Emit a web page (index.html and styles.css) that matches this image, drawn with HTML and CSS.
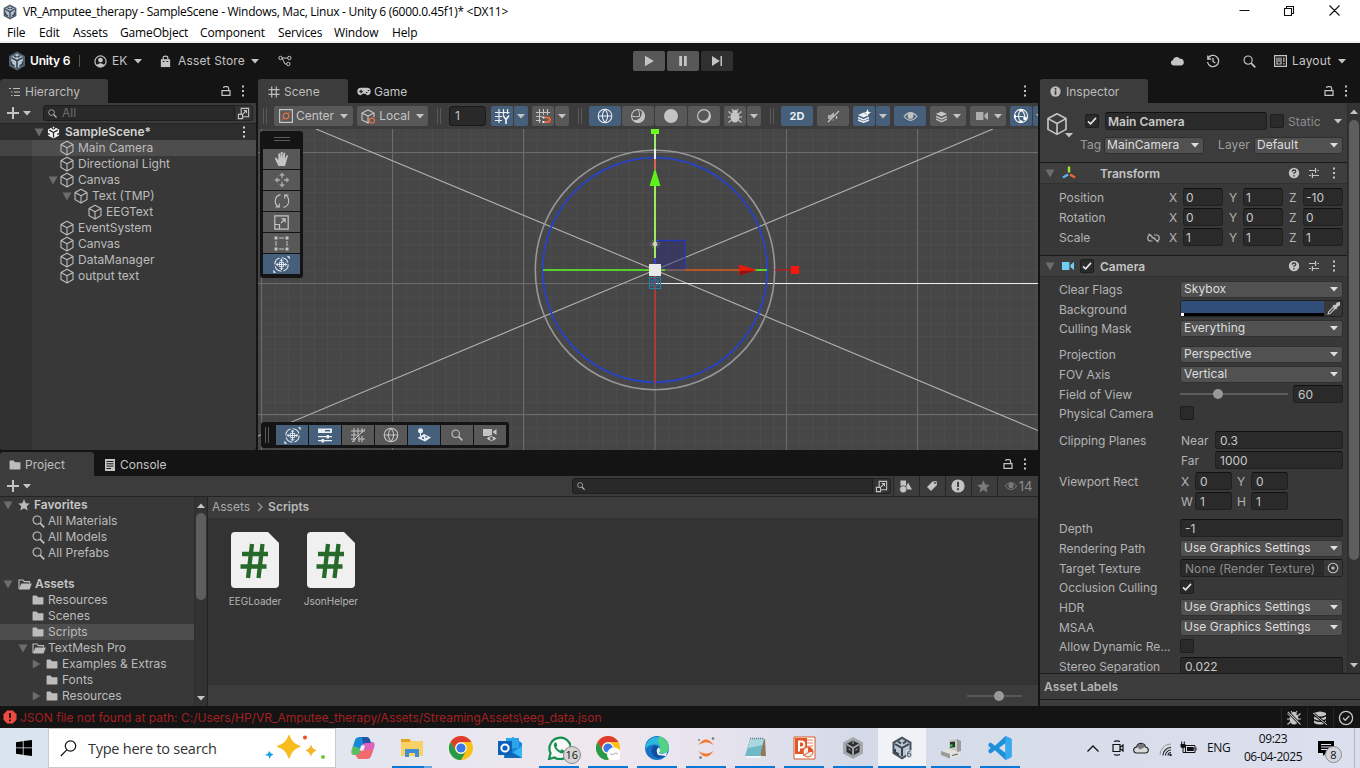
FILE: index.html
```html
<!DOCTYPE html>
<html lang="en">
<head>
<meta charset="utf-8">
<title>VR_Amputee_therapy - SampleScene - Unity 6</title>
<link rel="stylesheet" href="styles.css">
</head>
<body>
<svg class="defs" aria-hidden="true">
  <symbol id="cube" viewBox="0 0 16 16"><path d="M8 1.2 14 4.4V11.6L8 14.9 2 11.6V4.4ZM2 4.4 8 7.7 14 4.4M8 7.7V14.9" fill="none" stroke="currentColor" stroke-width="1.1" stroke-linejoin="round"/></symbol>
  <symbol id="down" viewBox="0 0 8 5"><path d="M0 0H8L4 4.6Z" fill="currentColor"/></symbol>
  <symbol id="fold" viewBox="0 0 10 9"><path d="M.5 .5H9.5L5 8.5Z" fill="currentColor"/></symbol>
  <symbol id="foldr" viewBox="0 0 9 10"><path d="M.8 .5V9.5L8.2 5Z" fill="currentColor"/></symbol>
  <symbol id="lock" viewBox="0 0 12 12"><path d="M2 5.6H10V10.4H2ZM8.6 5.4V3.2Q8.6 1.6 7 1.6H5Q3.6 1.6 3.5 3" fill="none" stroke="currentColor" stroke-width="1.2"/></symbol>
  <symbol id="dots" viewBox="0 0 4 12"><path d="M1 .5H3V2.5H1ZM1 5H3V7H1ZM1 9.5H3V11.5H1Z" fill="currentColor"/></symbol>
  <symbol id="plus" viewBox="0 0 12 12"><path d="M6 0V12M0 6H12" stroke="currentColor" stroke-width="2"/></symbol>
  <symbol id="popout" viewBox="0 0 14 14"><path d="M4.5 8V1.5H12.5V10.5H6.5M1.5 8H6V12.5H1.5ZM6.5 7.5 10 4M7.2 3.7H10.2V6.8" fill="none" stroke="currentColor" stroke-width="1.2"/></symbol>
  <symbol id="mag" viewBox="0 0 14 14"><circle cx="5.5" cy="5.5" r="4.4" fill="none" stroke="currentColor" stroke-width="1.2"/><path d="M8.8 8.8 13.2 13.2" stroke="currentColor" stroke-width="1.9"/></symbol>
  <symbol id="folder" viewBox="0 0 13 11"><path d="M.5 1.5Q.5.5 1.5.5H5L6.5 2.5H12.5V10Q12.5 10.5 12 10.5H1Q.5 10.5.5 10Z" fill="currentColor"/></symbol>
  <symbol id="folderopen" viewBox="0 0 14 11"><path d="M1 10V1H5L6.3 2.6H11.6V4.3" fill="none" stroke="currentColor" stroke-width="1.1"/><path d="M3.3 4.4H13.8L11.6 10.5H.8Z" fill="currentColor"/></symbol>
  <symbol id="star" viewBox="0 0 12 12"><path d="M6 .3 7.7 4.2 11.8 4.6 8.7 7.3 9.7 11.5 6 9.3 2.3 11.5 3.3 7.3.2 4.6 4.3 4.2Z" fill="currentColor"/></symbol>
  <symbol id="eye" viewBox="0 0 16 12"><path d="M1 6Q8-2.4 15 6 8 14.4 1 6Z" fill="none" stroke="currentColor" stroke-width="1.2"/><circle cx="8" cy="5.4" r="3.1" fill="currentColor"/></symbol>
  <symbol id="grid" viewBox="0 0 12 12"><path d="M3.7 .5V11.5M8.3 .5V11.5M.5 3.7H11.5M.5 8.3H11.5" stroke="currentColor" stroke-width="1.2"/></symbol>
  <symbol id="globe" viewBox="0 0 16 16"><circle cx="8" cy="8" r="6.8" fill="none" stroke="currentColor" stroke-width="1.1"/><path d="M1.2 8H14.8M8 1.2Q2.6 8 8 14.8M8 1.2Q13.4 8 8 14.8" fill="none" stroke="currentColor" stroke-width="1.1"/></symbol>
  <symbol id="check" viewBox="0 0 12 12"><path d="M2 6.3 4.6 8.8 10 2.9" fill="none" stroke="#e6e6e6" stroke-width="1.6"/></symbol>
  <symbol id="help" viewBox="0 0 12 12"><circle cx="6" cy="6" r="5.2" fill="currentColor"/><path d="M4.2 4.6Q4.3 3 6 3T7.8 4.5Q7.8 5.4 6 6V7.1M6 8V9.4" fill="none" stroke="#3c3c3c" stroke-width="1.3"/></symbol>
  <symbol id="preset" viewBox="0 0 12 12"><path d="M1 3.5H7M9.4 3.5H11M7.6 1V6M1 8.5H3M5 8.5H11M4.4 6V11" stroke="currentColor" stroke-width="1.2"/></symbol>
  <symbol id="camera" viewBox="0 0 14 10"><path d="M1 1H8.4V9H1ZM9.5 3.8 13 1V9L9.5 6.2Z" fill="currentColor"/></symbol>
  <symbol id="bug" viewBox="0 0 16 16"><ellipse cx="8" cy="9" rx="4.4" ry="5.6" fill="currentColor"/><path d="M4.800 4Q8 -.5 11.200 4Z" fill="currentColor"/><path d="M1.500 3.500 5 6.500M14.500 3.500 11 6.500M1 9H15M1.500 14.500 5 11.500M14.500 14.500 11 11.500M5 1 6.4 3M11 1 9.6 3" fill="none" stroke="currentColor" stroke-width="1.1"/></symbol>
  <symbol id="move" viewBox="0 0 16 16"><path d="M8 2.5V6.2M8 9.8V13.5M2.5 8H6.2M9.8 8H13.5" stroke="currentColor" stroke-width="1.3"/><path d="M5.2 3.8 8 .5 10.8 3.8ZM5.2 12.2 8 15.5 10.8 12.2ZM3.8 5.2 .5 8 3.8 10.8ZM12.2 5.2 15.5 8 12.2 10.8Z" fill="currentColor"/></symbol>
  <symbol id="transform" viewBox="0 0 16 16"><circle cx="8" cy="8" r="6.3" fill="none" stroke="currentColor" stroke-width="1" stroke-dasharray="7.900 2"/><path d="M8 3V13M3 8H13M6.400 4.600 8 3 9.600 4.600M6.400 11.400 8 13 9.600 11.400M4.600 6.400 3 8 4.600 9.600M11.400 6.400 13 8 11.400 9.600M6 6H10V10H6Z" fill="none" stroke="currentColor" stroke-width=".9"/><path d="M13 .3H15.7V3ZM.3 13V15.7H3Z" fill="currentColor"/></symbol>
  <symbol id="layers" viewBox="0 0 14 14"><path d="M7 1.5 13 4.2 7 7 1 4.2Z" fill="currentColor"/><path d="M1.2 7 7 9.6 12.8 7M1.2 9.9 7 12.5 12.8 9.9" fill="none" stroke="currentColor" stroke-width="1.6"/></symbol>
  <symbol id="hex" viewBox="0 0 18 20"><path d="M9 .5 17 5V15L9 19.5 1 15V5Z" fill="#4e5f70"/><path d="M9 2.8 14.800 6V14L9 17.200 3.200 14V6Z" fill="#b9c6d0"/><path d="M9 9.8 3.4 6.6M9 9.8 14.6 6.6M9 9.8V17M6 4.7 8.5 6.2M12 4.7 9.5 6.2M3.5 10.5V13.3L6.5 15M14.5 10.5V13.3L11.5 15" stroke="#344453" stroke-width="1.6" fill="none"/></symbol>
  <symbol id="chrome" viewBox="0 0 24 24"><circle cx="12" cy="12" r="12" fill="#fbc116"/><path d="M1.6 6A12 12 0 0 1 22.4 6H12A6 6 0 0 0 6.8 15Z" fill="#df3b30"/><path d="M1.6 6A12 12 0 0 0 12 24L17.2 15A6 6 0 0 1 6.8 15Z" fill="#249b4a"/><circle cx="12" cy="12" r="5.7" fill="#fff"/><circle cx="12" cy="12" r="4.6" fill="#3978e8"/></symbol>
</svg>

<header class="titlebar">
  <svg class="i16 ticon"><use href="#hex"/></svg>
  <span class="title">VR_Amputee_therapy - SampleScene - Windows, Mac, Linux - Unity 6 (6000.0.45f1)* &lt;DX11&gt;</span>
  <svg class="winbtns" viewBox="0 0 110 22"><path d="M.5 9.500H10.500M45.500 7.500H52.500V14.500H45.500ZM47.500 7V5.500H54.500V12.500H53M90.500 4.500 100.500 14.500M100.500 4.500 90.500 14.500" fill="none" stroke="#111" stroke-width="1.100"/></svg>
</header>
<nav class="menubar"><span class="m1">File</span><span class="m2">Edit</span><span class="m3">Assets</span><span class="m4">GameObject</span><span class="m5">Component</span><span class="m6">Services</span><span class="m7">Window</span><span>Help</span></nav>

<div class="toolbar">
  <div class="tb-left">
    <svg class="ulogo"><use href="#hex"/></svg><b class="uname">Unity 6</b><i class="sep"></i>
    <svg class="i13 acc" viewBox="0 0 14 14"><circle cx="7" cy="7" r="6" fill="none" stroke="currentColor" stroke-width="1.300"/><circle cx="7" cy="5.500" r="2.600" fill="currentColor"/><path d="M2.500 11Q7 6.500 11.500 11 7 15 2.500 11Z" fill="currentColor"/></svg>
    <span class="ek">EK</span><svg class="dn"><use href="#down"/></svg>
    <svg class="i13 bag" viewBox="0 0 12 14"><path d="M1 4.500H11V13H1Z" fill="currentColor"/><path d="M3.500 5V3Q3.500 1.200 6 1.200T8.500 3V5" fill="none" stroke="currentColor" stroke-width="1.300"/><path d="M3 7H5M7 7H9" stroke="#191919"/></svg>
    <span class="as">Asset Store</span><svg class="dn"><use href="#down"/></svg>
    <svg class="branch" viewBox="0 0 14 12"><path d="M4 3H9.500M4 3 7 9H8.500" fill="none" stroke="currentColor"/><circle cx="2.500" cy="3" r="1.700" fill="none" stroke="currentColor"/><circle cx="11.300" cy="3" r="1.700" fill="none" stroke="currentColor"/><circle cx="10.300" cy="9" r="1.700" fill="none" stroke="currentColor"/></svg>
  </div>
  <div class="play">
    <span><svg class="i13" viewBox="0 0 12 12"><path d="M2 .8V11.200L10.800 6Z" fill="currentColor"/></svg></span>
    <span><svg class="i13" viewBox="0 0 12 12"><path d="M2.200 1H5V11H2.200ZM7 1H9.800V11H7Z" fill="currentColor"/></svg></span>
    <span class="off"><svg class="i13" viewBox="0 0 12 12"><path d="M1 1V11L8.800 6ZM9.500 1H11V11H9.500Z" fill="currentColor"/></svg></span>
  </div>
  <div class="tb-right">
    <svg class="cloud" viewBox="0 0 14 10"><path d="M3.500 9.500A2.800 2.800 0 0 1 3 4 3.800 3.800 0 0 1 10 2.800 3.300 3.300 0 0 1 10.800 9.500Z" fill="currentColor"/></svg>
    <svg class="hist" viewBox="0 0 14 14"><path d="M2 4.500A5.600 5.600 0 1 1 1.500 8M1.800 1.500V5H5.200M7 4V7.500L9.300 9" fill="none" stroke="currentColor" stroke-width="1.300"/></svg>
    <svg class="msearch"><use href="#mag"/></svg>
    <svg class="lay" viewBox="0 0 13 12"><path d="M.6 .6H12.400V11.400H.6ZM3 2.500V9H7V2.500M5 2.500V7M9.800 2.500V7M9.800 8V9.500" fill="none" stroke="currentColor" stroke-width="1.200"/></svg>
    <span class="layout-t">Layout</span><svg class="dn"><use href="#down"/></svg>
  </div>
</div>

<main class="work">
 <div class="left">
  <div class="top">
   <section class="hier">
    <div class="tabs"><div class="tab t-h"><svg class="i12" viewBox="0 0 12 12"><path d="M0 2.500H2M4 2.500H11M2 6H3.500M5 6H11M2 9.500H3.500M5 9.500H11" stroke="currentColor" stroke-width="1.200"/></svg><span>Hierarchy</span></div><svg class="lock"><use href="#lock"/></svg><svg class="dots"><use href="#dots"/></svg></div>
    <div class="bar hbar"><svg class="plus"><use href="#plus"/></svg><svg class="dns"><use href="#down"/></svg><div class="search hs"><svg class="i9"><use href="#mag"/></svg><span>All</span></div><div class="pop"><svg class="i13"><use href="#popout"/></svg></div></div>
    <div class="tree">
      <div class="scene-row"><svg class="fold"><use href="#fold"/></svg><svg class="i13 uw" viewBox="0 0 14 14"><path d="M7 .5 13 3.800V10.200L7 13.500 1 10.200V3.800Z" fill="#f2f2f2"/><path d="M7 7 2.500 4.500M7 7 11.500 4.500M7 7V12.500M4.500 .5 6.500 3.500M9.500 .5 7.500 3.500M0 8 3 9M14 8 11 9" stroke="#2a2a2a" stroke-width="1.400"/></svg><b>SampleScene*</b><svg class="dots"><use href="#dots"/></svg></div>
      <div class="row sel l1"><svg class="cube"><use href="#cube"/></svg>Main Camera</div>
      <div class="row l1"><svg class="cube"><use href="#cube"/></svg>Directional Light</div>
      <div class="row l1 f"><svg class="fold"><use href="#fold"/></svg><svg class="cube"><use href="#cube"/></svg>Canvas</div>
      <div class="row l2 f"><svg class="fold"><use href="#fold"/></svg><svg class="cube"><use href="#cube"/></svg>Text (TMP)</div>
      <div class="row l3"><svg class="cube"><use href="#cube"/></svg>EEGText</div>
      <div class="row l1"><svg class="cube"><use href="#cube"/></svg>EventSystem</div>
      <div class="row l1"><svg class="cube"><use href="#cube"/></svg>Canvas</div>
      <div class="row l1"><svg class="cube"><use href="#cube"/></svg>DataManager</div>
      <div class="row l1"><svg class="cube"><use href="#cube"/></svg>output text</div>
    </div>
   </section>

   <section class="scene">
    <div class="tabs"><div class="tab t-s"><svg class="i12"><use href="#grid"/></svg><span>Scene</span></div><div class="tab2"><svg class="pad" viewBox="0 0 14 9"><path d="M4 .8H10Q13.700 .8 13.700 4.500T10 8.200L8.500 6.700H5.500L4 8.200Q.3 8.200 .3 4.500T4 .8Z" fill="currentColor"/><path d="M2.200 4.500H5.800M4 2.700V6.300M9 5.500H10.400M10.800 3.500H12.200" stroke="#191919" stroke-width="1.200"/></svg><span>Game</span></div><svg class="dots end"><use href="#dots"/></svg></div>
    <div class="stools">
      <i class="grip"></i>
      <div class="b w78 g8"><svg class="i14" viewBox="0 0 14 14"><path d="M.6 .6H13.400V13.400H.6Z" fill="none" stroke="currentColor" stroke-width="1.200"/><path d="M2.500 11.500 5 9M9 5 11.500 2.500" stroke="#e0704a"/><circle cx="7" cy="7" r="2.800" fill="none" stroke="#e0704a" stroke-width="1.300"/></svg><span>Center</span><svg class="dn"><use href="#down"/></svg></div>
      <div class="b w71 g4"><svg class="i15" viewBox="0 0 15 15"><path d="M8 13.500 7 14 1 11V4L7 1 13 4V8M1 4 7 7 13 4M7 7V14" fill="none" stroke="currentColor" stroke-width="1.200"/><circle cx="11" cy="11.600" r="2.500" fill="none" stroke="#e0704a" stroke-width="1.300"/></svg><span>Local</span><svg class="dn"><use href="#down"/></svg></div>
      <i class="grip g9"></i>
      <div class="num g8b">1</div>
      <div class="b on w22 g5"><svg class="i15" viewBox="0 0 15 15"><path d="M4 0V14M8.500 0V6M12.500 0V5M0 3.500H14.500M0 7.500H7M0 11.500H7" stroke="currentColor" stroke-width="1.200"/><path d="M8 6.500 11 10.500 14 6.500M11 10.500V15" fill="none" stroke="currentColor" stroke-width="1.700"/></svg></div><div class="b on w14 g1"><svg class="dns"><use href="#down"/></svg></div>
      <div class="b w22 g4"><svg class="i15" viewBox="0 0 15 15"><path d="M3.500 0V14M7.500 0V6M11.500 0V6M0 3.500H14M0 7.500H6M0 11.500H5" stroke="currentColor" stroke-width="1.100"/><path d="M9 8.500H11.500Q13.800 8.500 13.800 10.800T11.500 13H9" fill="none" stroke="#f0663c" stroke-width="2.200"/><path d="M6.500 7.500H8.500V9.500H6.500ZM6.500 12H8.500V14H6.500Z" fill="#eee"/></svg></div><div class="b w14 g1"><svg class="dns"><use href="#down"/></svg></div>
      <i class="grip g9"></i>
      <div class="b on w32 g8"><svg class="i16"><use href="#globe"/></svg></div>
      <div class="b w32 g1"><svg class="i16" viewBox="0 0 16 16"><circle cx="8" cy="8" r="6.500" fill="none" stroke="currentColor" stroke-width="1.100"/><path d="M11.500 2.500A6.600 6.600 0 1 1 2.500 11.800Q7 13 9.800 10T11.500 2.500Z" fill="currentColor"/><path d="M1.500 8Q5 9.300 9.500 8.500 10 5 8.200 1.500" fill="none" stroke="currentColor"/></svg></div>
      <div class="b w32 g1"><svg class="i16" viewBox="0 0 16 16"><circle cx="8" cy="8" r="7" fill="currentColor"/></svg></div>
      <div class="b w32 g1"><svg class="i16" viewBox="0 0 16 16"><circle cx="8" cy="8" r="6.400" fill="none" stroke="currentColor" stroke-width="1.200"/><path d="M11 2.300A6.500 6.500 0 1 1 2.200 11 5.700 5.700 0 1 0 11 2.300Z" fill="currentColor"/></svg></div>
      <div class="b w22 g4"><svg class="i16"><use href="#bug"/></svg></div><div class="b w14 g1"><svg class="dns"><use href="#down"/></svg></div>
      <i class="grip g9"></i>
      <div class="b on w32 g7 twod">2D</div>
      <div class="b w32 g4"><svg class="i13" viewBox="0 0 13 13"><path d="M1 5H3.500L7 2V6L3.500 9H1ZM7 9V11L5.500 10" fill="currentColor" opacity=".8"/><path d="M1 12 12 1M9.500 6V9" stroke="currentColor" stroke-width="1.300"/></svg></div>
      <div class="b on w22 g4"><svg class="i14" viewBox="0 0 14 14"><path d="M6.500 3.500 1 6 6.500 8.500 11 6.500" fill="currentColor"/><path d="M1 8.500 6.500 11 12 8.500M1 11 6.500 13.300 12 11" fill="none" stroke="currentColor" stroke-width="1.500"/><path d="M10.500 0 11.500 2.800 14 3.800 11.500 4.800 10.500 7.500 9.500 4.800 7 3.800 9.500 2.800Z" fill="#fff"/></svg></div><div class="b on w14 g1"><svg class="dns"><use href="#down"/></svg></div>
      <div class="b on w32 g4"><svg class="eye"><use href="#eye"/></svg></div>
      <div class="b w36 g4"><svg class="i13"><use href="#layers"/></svg><svg class="dns m5l"><use href="#down"/></svg></div>
      <div class="b w36 g4"><svg class="cam"><use href="#camera"/></svg><svg class="dns m5l"><use href="#down"/></svg></div>
      <div class="b on w22 g4"><svg class="i16" viewBox="0 0 16 16"><circle cx="8" cy="8" r="6.600" fill="none" stroke="currentColor" stroke-width="1.200"/><path d="M8 1.500Q3 8 8 14.500M8 1.500Q12 5 12 10M1.500 8.500H9M9 8.500 13.500 10" fill="none" stroke="currentColor" stroke-width="1.200"/><path d="M6.500 1H9.500V3.500H6.500ZM10.500 9H13.500V12H10.500ZM6.500 12.500H9.500V15H6.500ZM1 7H3V10H1Z" fill="#fff"/></svg></div><div class="b on w14 g1"><svg class="dns"><use href="#down"/></svg></div>
    </div>
    <div class="view">
      <svg class="canvas" viewBox="258 129 780 321">
        <defs>
          <pattern id="minor" x="261.500" y="152.500" width="13.120" height="13.120" patternUnits="userSpaceOnUse"><path d="M0 0H13.120M0 0V13.120" stroke="#4e4e4e" stroke-width="1.600" fill="none"/></pattern>
        </defs>
        <rect x="258" y="129" width="780" height="321" fill="#464646"/>
        <rect x="258" y="129" width="780" height="321" fill="url(#minor)"/>
        <path d="M261.500 129V450M392.500 129V450M523.500 129V450M655 129V450M786.500 129V450M917.500 129V450M258 152.500H1038M258 283.500H1038M258 414.500H1038" stroke="#6c6c6c" fill="none"/>
        <path d="M316 129 655 270 1038 430.500M993 129 655 270 258 436" stroke="#b0b0b0" stroke-width="1.100" fill="none"/>
        <path d="M655 283.500H1038" stroke="#efefef"/>
        <circle cx="655" cy="270" r="119.700" fill="none" stroke="#979797" stroke-width="1.600"/>
        <circle cx="655" cy="270" r="112.300" fill="none" stroke="#2743c9" stroke-width="1.800"/>
        <rect x="655" y="240.500" width="30" height="29.500" fill="#2b2b80" fill-opacity=".45" stroke="#2038c0" stroke-width="1.200"/>
        <path d="M543 270H767" stroke="#57cf2c" stroke-width="1.800"/>
        <path d="M665 270H685" stroke="#7a3a6c" stroke-width="1.600"/><path d="M685 270H740" stroke="#b4561f" stroke-width="1.800"/>
        <path d="M775 270H792" stroke="#a82420" stroke-width="1.600"/>
        <path d="M739 264.500 757 270 739 275.500Z" fill="#e81a0c"/><path d="M740 271 755 270.500 739 275.500Z" fill="#8f120c"/>
        <rect x="791" y="266" width="8" height="8" fill="#fb160c"/>
        <path d="M655 129V169" stroke="#9dec72" stroke-width="2"/><path d="M655 149V159" stroke="#f1f1f1" stroke-width="2"/><path d="M655 159V169" stroke="#d9625a" stroke-width="2"/>
        <path d="M655 186V258" stroke="#9dec5c" stroke-width="2"/><path d="M655 258V265" stroke="#3a3fd0" stroke-width="2"/>
        <path d="M655 276V383" stroke="#b23a33" stroke-width="1.800"/>
        <path d="M655 168 660.500 186H649.500Z" fill="#5cf01c"/>
        <rect x="651" y="129" width="8" height="5" fill="#6cfb1a"/>
        <circle cx="655" cy="244" r="2.600" fill="#d9d9c8" opacity=".8"/><circle cx="655" cy="244" r="4.300" fill="none" stroke="#c9c9b8" stroke-dasharray="1 1.700" opacity=".6"/>
        <path d="M649.500 277.500H660.500V288.500H649.500ZM652 280V286H658M652 280H658V286" fill="none" stroke="#2a7fae" stroke-width="1.100"/><path d="M652 279H655V283H652ZM655 284H657V287H655Z" fill="#1b62a0"/>
        <rect x="649" y="264" width="12" height="12" fill="#e9e9e9"/>
      </svg>
      <div class="vtools"><i class="hgrip"></i>
        <div><svg class="i16" viewBox="0 0 16 16"><path d="M4.500 15 2 10 .8 7.300 2 6.500 4.300 9V2.500H6V7.500L6.800 1H8.500V7.500L9.600 1.500 11.200 2 10.800 8 12.800 4 14 4.700 12 11.500 11 15Z" fill="currentColor"/></svg></div>
        <div><svg class="i16 dim"><use href="#move"/></svg></div>
        <div><svg class="i16" viewBox="0 0 16 16"><path d="M5 14A6.600 6.600 0 0 1 6.500 1.600M11 2A6.600 6.600 0 0 1 9.500 14.400M1.500 14H5.300V10.500M14.500 2H10.700V5.500" fill="none" stroke="currentColor" stroke-width="1.100"/></svg></div>
        <div><svg class="i15" viewBox="0 0 15 15"><path d="M.8 .8H14.200V14.200H.8ZM.8 9.500H5.500V14.200M7 8 11 4M7.500 3.800H11.200V7.500" fill="none" stroke="currentColor" stroke-width="1.200"/></svg></div>
        <div><svg class="i15" viewBox="0 0 15 15"><path d="M2 5V10M13 5V10M5 2H10M5 13H10" fill="none" stroke="currentColor"/><path d="M.5 .5H3.500V3.500H.5ZM11.500 .5H14.500V3.500H11.500ZM.5 11.500H3.500V14.500H.5ZM11.500 11.500H14.500V14.500H11.500Z" fill="currentColor"/></svg></div>
        <div class="on"><svg class="i17"><use href="#transform"/></svg></div>
      </div>
      <div class="htools"><i class="grip"></i>
        <div class="on"><svg class="i17"><use href="#transform"/></svg></div>
        <div class="on"><svg class="i16" viewBox="0 0 16 16"><path d="M1 1.500H15V6H1ZM1 9H15V10.300H1ZM1 13H15V14.200H1Z" fill="currentColor"/><path d="M8 3.700H13" stroke="#46607c" stroke-width="1.500"/><path d="M9.500 8H12V11.500H9.500ZM4.500 12H7V15.500H4.500Z" fill="currentColor"/></svg></div>
        <div><svg class="i16" viewBox="0 0 16 16"><path d="M4 1V15M8 1V7M12 1V6M1 4H15M1 8H9M1 12H6M2 15 15 2M8 12H15M12 9V15M9 9V15" stroke="currentColor" stroke-width="1"/></svg></div>
        <div><svg class="i16"><use href="#globe"/></svg></div>
        <div class="on"><svg class="i16" viewBox="0 0 16 16"><path d="M8 7 15 10.500 9 14.500 1.500 11Z" fill="currentColor"/><circle cx="4.500" cy="3.800" r="2.500" fill="currentColor"/><path d="M4.500 5V9" stroke="currentColor"/><path d="M6 10.500 8 11.500M9.500 9.500 11 10.300" stroke="#46607c" stroke-width="1.500"/></svg></div>
        <div><svg class="i12 "><use href="#mag"/></svg></div>
        <div><svg class="i16" viewBox="0 0 16 16"><path d="M1 2H10V9H1ZM11 4.500 14.500 2V8L11 5.500Z" fill="currentColor"/><path d="M4 11.500Q9.500 6 15 11.500 9.500 17 4 11.500Z" fill="currentColor" stroke="#585858"/><circle cx="9.500" cy="11.500" r="1.500" fill="#585858"/></svg></div>
      </div>
    </div>
   </section>
  </div>

  <section class="project">
    <div class="tabs"><div class="tab t-p"><svg class="fol"><use href="#folder"/></svg><span>Project</span></div><div class="tab2 con"><svg class="conic" viewBox="0 0 10 12"><path d="M0 0H10V12H0Z" fill="currentColor"/><path d="M1.500 2.500H8.500M1.500 4.800H8.500M1.500 7.100H8.500M1.500 9.500H6" stroke="#191919"/></svg><span>Console</span></div><svg class="lock plock"><use href="#lock"/></svg><svg class="dots"><use href="#dots"/></svg></div>
    <div class="bar pbar"><svg class="plus"><use href="#plus"/></svg><svg class="dns"><use href="#down"/></svg>
      <div class="search ps"><svg class="i8"><use href="#mag"/></svg></div><div class="pop"><svg class="i13"><use href="#popout"/></svg></div>
      <div class="pb pb1"><svg class="i13" viewBox="0 0 13 13"><path d="M1.500 .5H7V6H1.500ZM9 2.500 13 9.500H6Z" fill="currentColor"/><circle cx="4.200" cy="9.300" r="3.600" fill="currentColor" stroke="#3c3c3c" stroke-width=".7"/></svg></div>
      <div class="pb"><svg class="i12" viewBox="0 0 12 12"><path d="M6.500 1.500 10.500 1 11 5 5 11 1 7Z" fill="currentColor"/><circle cx="9" cy="3" r=".9" fill="#3c3c3c"/></svg></div>
      <div class="pb"><svg class="i14" viewBox="0 0 14 14"><circle cx="7" cy="7" r="6.600" fill="currentColor"/><path d="M7 2.800V8M7 9.300V11.200" stroke="#333" stroke-width="1.800"/></svg></div>
      <div class="pb dimmer"><svg class="i13"><use href="#star"/></svg></div>
      <div class="pb pe dimmer"><svg class="eye2"><use href="#eye"/></svg><span>14</span></div>
    </div>
    <div class="pbody">
      <div class="ptree">
        <div class="pr root"><svg class="fold"><use href="#fold"/></svg><svg class="i12 st"><use href="#star"/></svg><b>Favorites</b></div>
        <div class="pr p1 q"><svg class="i13"><use href="#mag"/></svg>All Materials</div>
        <div class="pr p1 q"><svg class="i13"><use href="#mag"/></svg>All Models</div>
        <div class="pr p1 q"><svg class="i13"><use href="#mag"/></svg>All Prefabs</div>
        <div class="pr gap"><svg class="fold"><use href="#fold"/></svg><svg class="fo"><use href="#folderopen"/></svg><b>Assets</b></div>
        <div class="pr p1"><svg class="fol"><use href="#folder"/></svg>Resources</div>
        <div class="pr p1"><svg class="fol"><use href="#folder"/></svg>Scenes</div>
        <div class="pr p1 sel"><svg class="fol"><use href="#folder"/></svg>Scripts</div>
        <div class="pr p1f"><svg class="fold"><use href="#fold"/></svg><svg class="fo"><use href="#folderopen"/></svg>TextMesh Pro</div>
        <div class="pr p2f"><svg class="foldr"><use href="#foldr"/></svg><svg class="fol"><use href="#folder"/></svg>Examples &amp; Extras</div>
        <div class="pr p2"><svg class="fol"><use href="#folder"/></svg>Fonts</div>
        <div class="pr p2f"><svg class="foldr"><use href="#foldr"/></svg><svg class="fol"><use href="#folder"/></svg>Resources</div>
      </div>
      <div class="sb psb"><svg class="dns up"><use href="#down"/></svg><i class="thumb"></i><svg class="dns"><use href="#down"/></svg></div>
      <div class="files">
        <div class="crumb"><span>Assets</span><svg class="chev" viewBox="0 0 6 10"><path d="M1 1 5 5 1 9" fill="none" stroke="#9a9a9a" stroke-width="1.300"/></svg><b>Scripts</b></div>
        <div class="grid">
          <div class="file"><svg viewBox="0 0 48 56"><path d="M4 0H37L48 11V52Q48 56 44 56H4Q0 56 0 52V4Q0 0 4 0Z" fill="#f0f0f0"/><path d="M21 12 17 46M31.500 12 27.500 46M11 22H37M9.500 34.500H35.500" stroke="#26692b" stroke-width="4.300"/></svg><span>EEGLoader</span></div>
          <div class="file"><svg viewBox="0 0 48 56"><path d="M4 0H37L48 11V52Q48 56 44 56H4Q0 56 0 52V4Q0 0 4 0Z" fill="#f0f0f0"/><path d="M21 12 17 46M31.500 12 27.500 46M11 22H37M9.500 34.500H35.500" stroke="#26692b" stroke-width="4.300"/></svg><span>JsonHelper</span></div>
        </div>
        <div class="fbar"><svg width="56" height="12" viewBox="0 0 56 12"><path d="M0 6H55" stroke="#606060" stroke-width="1.600"/><circle cx="32" cy="6" r="5" fill="#999"/></svg></div>
      </div>
    </div>
  </section>
 </div>

 <section class="insp">
  <div class="tabs"><div class="tab t-i"><svg class="i11" viewBox="0 0 12 12"><circle cx="6" cy="6" r="5.600" fill="currentColor"/><path d="M6 2.200V4M6 5V9.500" stroke="#3c3c3c" stroke-width="1.800"/></svg><span>Inspector</span></div><svg class="lock"><use href="#lock"/></svg><svg class="dots"><use href="#dots"/></svg></div>
  <div class="ibody">
   <div class="icont">
    <div class="ihead">
      <div class="bigcube"><svg class="i24"><use href="#cube"/></svg><svg class="dns"><use href="#down"/></svg></div>
      <div class="hl">
        <div class="h1"><div class="cb"><svg class="i12"><use href="#check"/></svg></div><div class="in name">Main Camera</div><div class="cb cbs"></div><span>Static</span><svg class="dns"><use href="#down"/></svg></div>
        <div class="h2"><span class="tg">Tag</span><div class="dd tagd">MainCamera<svg class="dns"><use href="#down"/></svg></div><span class="ly">Layer</span><div class="dd layd">Default<svg class="dns"><use href="#down"/></svg></div></div>
      </div>
    </div>
    <div class="chead"><svg class="fold"><use href="#fold"/></svg><svg class="i14 tr" viewBox="0 0 14 14"><path d="M7 .5V6.500" stroke="#9fe830" stroke-width="2.400"/><path d="M6 8.500 1 11.500" stroke="#58b8f0" stroke-width="2.400"/><path d="M8 8.500 13 11.500" stroke="#f0663c" stroke-width="2.400"/></svg><b class="c1">Transform</b><svg class="hi help"><use href="#help"/></svg><svg class="hi"><use href="#preset"/></svg><svg class="dots"><use href="#dots"/></svg></div>
    <div class="trs">
      <div class="v3"><span>Position</span><em>X</em><div class="in">0</div><em>Y</em><div class="in">1</div><em>Z</em><div class="in">-10</div></div>
      <div class="v3"><span>Rotation</span><em>X</em><div class="in">0</div><em>Y</em><div class="in">0</div><em>Z</em><div class="in">0</div></div>
      <div class="v3"><span>Scale<svg class="link" viewBox="0 0 13 10"><path d="M5.500 8H3.700Q.8 8 .8 5T3.700 2H4.500M7 2H9.300Q12.200 2 12.200 5T9.300 8H9M4.500 5H8.500M1.500 .8 11.500 9.300" fill="none" stroke="currentColor" stroke-width="1.200"/></svg></span><em>X</em><div class="in">1</div><em>Y</em><div class="in">1</div><em>Z</em><div class="in">1</div></div>
    </div>
    <div class="chead cam-h"><svg class="fold"><use href="#fold"/></svg><svg class="camb"><use href="#camera"/></svg><div class="cb"><svg class="i12"><use href="#check"/></svg></div><b class="c2">Camera</b><svg class="hi help"><use href="#help"/></svg><svg class="hi"><use href="#preset"/></svg><svg class="dots"><use href="#dots"/></svg></div>
    <div class="props">
      <div class="p"><label>Clear Flags</label><div class="dd">Skybox<svg class="dns"><use href="#down"/></svg></div></div>
      <div class="p"><label>Background</label><div class="color"><i></i><svg class="i13" viewBox="0 0 12 12"><path d="M1 11 1.500 9 6.500 4 8 5.500 3 10.500Z" fill="none" stroke="#c4c4c4"/><path d="M5.800 3 9 6.200M8 4.500 9.500 1.500 11 1 11 2.500Z" stroke="#c4c4c4" stroke-width="2" fill="#c4c4c4"/></svg></div></div>
      <div class="p s18"><label>Culling Mask</label><div class="dd">Everything<svg class="dns"><use href="#down"/></svg></div></div>
      <div class="p a7"><label>Projection</label><div class="dd">Perspective<svg class="dns"><use href="#down"/></svg></div></div>
      <div class="p"><label>FOV Axis</label><div class="dd">Vertical<svg class="dns"><use href="#down"/></svg></div></div>
      <div class="p"><label>Field of View</label><div class="slider"><i></i></div><div class="in fov">60</div></div>
      <div class="p s18"><label>Physical Camera</label><div class="cb"></div></div>
      <div class="p a8"><label>Clipping Planes</label><span class="sub">Near</span><div class="in">0.3</div></div>
      <div class="p"><label></label><span class="sub">Far</span><div class="in">1000</div></div>
      <div class="p a1 vr"><label>Viewport Rect</label><span>X</span><div class="in">0</div><span class="y">Y</span><div class="in">0</div></div>
      <div class="p vr"><label></label><span>W</span><div class="in">1</div><span class="y">H</span><div class="in">1</div></div>
      <div class="p a7"><label>Depth</label><div class="in">-1</div></div>
      <div class="p"><label>Rendering Path</label><div class="dd">Use Graphics Settings<svg class="dns"><use href="#down"/></svg></div></div>
      <div class="p"><label>Target Texture</label><div class="in obj"><span>None (Render Texture)</span><div><svg class="i12" viewBox="0 0 12 12"><circle cx="6" cy="6" r="4.800" fill="none" stroke="#c4c4c4" stroke-width="1.100"/><circle cx="6" cy="6" r="1.600" fill="#c4c4c4"/></svg></div></div></div>
      <div class="p s18"><label>Occlusion Culling</label><div class="cb"><svg class="i12"><use href="#check"/></svg></div></div>
      <div class="p a1"><label>HDR</label><div class="dd">Use Graphics Settings<svg class="dns"><use href="#down"/></svg></div></div>
      <div class="p"><label>MSAA</label><div class="dd">Use Graphics Settings<svg class="dns"><use href="#down"/></svg></div></div>
      <div class="p s18"><label>Allow Dynamic Re...</label><div class="cb"></div></div>
      <div class="p a1"><label>Stereo Separation</label><div class="in">0.022</div></div>
    </div>
   </div>
   <div class="sb isb"><svg class="dns up"><use href="#down"/></svg><i class="thumb"></i><svg class="dns"><use href="#down"/></svg></div>
  </div>
  <div class="labels"><b>Asset Labels</b></div>
  <div class="ifoot"></div>
 </section>
</main>

<div class="status"><svg class="err" viewBox="0 0 14 14"><path d="M4.200 .5H9.800L13.500 4.200V9.800L9.800 13.500H4.200L.5 9.800V4.200Z" fill="#ee4a3f"/><path d="M7 3V8M7 9.500V11.300" stroke="#141414" stroke-width="1.900"/></svg><span>JSON file not found at path: C:/Users/HP/VR_Amputee_therapy/Assets/StreamingAssets\eeg_data.json</span>
  <div class="sic"><svg class="i16"><use href="#bug"/></svg><svg class="slash" viewBox="0 0 16 16"><path d="M1 1 15 15" stroke="#141414" stroke-width="3"/><path d="M1 1 15 15" stroke="currentColor" stroke-width="1.200"/></svg></div>
  <div class="sic"><svg class="i14" viewBox="0 0 14 14"><path d="M1 2Q7-1 13 2V4Q7 7 1 4ZM1 5.500Q7 8.500 13 5.500V8Q7 11 1 8ZM1 9.500Q7 12.500 13 9.500V12Q7 15 1 12Z" fill="currentColor"/><path d="M1 3 13 13" stroke="#141414" stroke-width="2.500"/><path d="M0 2 14 14" stroke="currentColor"/></svg></div>
  <div class="sic"><svg class="i16" viewBox="0 0 16 16"><circle cx="8" cy="8" r="6.600" fill="none" stroke="currentColor" stroke-width="1.300"/><path d="M5 8 7.300 10.200 11.200 6" fill="none" stroke="currentColor" stroke-width="1.300"/></svg></div>
</div>

<footer class="taskbar">
  <div class="start"><svg width="16" height="16" viewBox="0 0 16 16"><path d="M0 2.200 6.800 1.200V7.500H0ZM7.600 1.100 16 0V7.500H7.600ZM0 8.300H6.800V14.700L0 13.800ZM7.600 8.300H16V16L7.600 14.900Z" fill="#000"/></svg></div>
  <div class="wsearch"><svg width="17" height="17" viewBox="0 0 17 17"><circle cx="10.500" cy="6" r="5.200" fill="none" stroke="#111" stroke-width="1.200"/><path d="M6.800 9.800 .8 16" stroke="#111" stroke-width="1.200"/></svg><span>Type here to search</span>
    <svg class="spark" width="62" height="26" viewBox="0 0 62 26"><path d="M24 .5Q26.500 9 35 11.500 26.500 14 24 23 21.500 14 12.500 11.500 21.500 9 24 .5Z" fill="#f8bc1c" stroke="#f8bc1c" stroke-width="1.200" stroke-linejoin="round"/><path d="M46 9.500Q47.300 14 51.500 15.500 47.300 17 46 21.500 44.700 17 40.500 15.500 44.700 14 46 9.500Z" fill="#f5b52a"/><path d="M4 16 6 18.300 8.500 19.500 6 21 4.500 24 3.500 21 0 20 3 18.500Z" fill="#1ba4e8"/><circle cx="40" cy="2.500" r="2" fill="#e65224"/><circle cx="58" cy="22" r="2.100" fill="#7fc243"/></svg>
  </div>
  <div class="apps">
    <div class="app"><svg viewBox="0 0 24 24"><path d="M9 1H16Q18 1 19 4L20 7H15Q12 7 11 10L9 17Q8 19 5 19H3Q-1 19 1 13L4 4Q5 1 9 1Z" fill="#1689d8"/><path d="M3 10 5 19H3Q-1 19 1 13Z" fill="#e9c832"/><path d="M1.500 12 3 10 10 13 9 17Q8 19 5 19H3Q0 18 1.500 12Z" fill="#58bd62"/><path d="M21 6Q25 6 23 12L20 20Q19 23 15 23H9Q6 23 5 19 8 19 9 17L12 9Q13 6 15 6Z" fill="#dc62bc"/><path d="M5 19Q8 19 9 17L10 14H22L20 20Q19 23 15 23H9Q6 23 5 19Z" fill="#f26a6c"/><path d="M15 1Q18 1 19 4L20 7H15Q13 7 12 8L11 1Z" fill="#2453a8"/><path d="M10 9.500H14L12.500 14.500H8.700Z" fill="#f7eef8"/></svg></div>
    <div class="app run multi"><svg viewBox="0 0 24 24"><path d="M1 5V3H10L12 5H23V20H1Z" fill="#f9d267"/><path d="M1 3H10V6H1Z" fill="#e0a51d"/><path d="M5 21V13H19V21H15V17H9V21Z" fill="#3f8fd2"/></svg></div>
    <div class="app"><svg><use href="#chrome"/></svg></div>
    <div class="app"><svg viewBox="0 0 24 24"><path d="M6 7 15 1 24 7V22H6Z" fill="#1a86d9"/><path d="M8 2H21V12H8Z" fill="#2aa4ec"/><path d="M7 22 24 10V22Z" fill="#36b4f4"/><path d="M7 12 24 22H7Z" fill="#1269b8"/><path d="M0 5H14V19H0Z" fill="#0c62b8"/><circle cx="7" cy="12" r="3.600" fill="none" stroke="#fff" stroke-width="2"/></svg></div>
    <div class="app run"><svg viewBox="0 0 24 24"><path d="M2 23 3.500 17A10.700 10.700 0 1 1 7.500 21.500Z" fill="#f8f8f8" stroke="#159052" stroke-width="2.200"/><path d="M8 6.500Q6 8 7.500 11.500 10 16 14.500 17.500 17.500 17.500 17.500 14.800L14.700 13.300 13.200 14.800Q10.500 13.500 9.300 11L10.300 9.500 9.300 6.500Z" fill="#159052"/></svg><span class="badge">16</span></div>
    <div class="app run"><svg viewBox="0 0 24 24"><use href="#chrome"/><circle cx="18" cy="18.500" r="7" fill="#fff"/><path d="M14 17.500Q16 20 18 18T22 18" fill="none" stroke="#999" stroke-width=".8"/></svg></div>
    <div class="app run"><svg viewBox="0 0 24 24"><circle cx="12" cy="12" r="12" fill="#1873c8"/><path d="M.5 10A12 12 0 0 1 24 11Q24 17 17 17 13 17 14.500 14 16 9 10 8.500 4 8 .5 13Z" fill="#2eb7dc"/><path d="M14 .3A12 12 0 0 1 24 11Q24 17 17 17 13 17 14.500 14 16 9 13 6Z" fill="#55d184"/><path d="M9 9.500Q4 15 9 20 15 25 22 18 16 21 12.500 17.500 10 14 14 13 13 9 9 9.500Z" fill="#0d4f9e"/><path d="M14 11.500Q16 15 13.800 17 18 19 22 16L21 20 13 19Q10 13 14 11.500Z" fill="#eef1f8"/></svg></div>
    <div class="app run"><svg viewBox="0 0 24 24"><path d="M4.500 9Q12-2 19.500 9 12 3.500 4.500 9ZM4.500 15Q12 26 19.500 15 12 20.500 4.500 15Z" fill="#f37726"/><circle cx="19" cy="2.500" r="1.300" fill="#777"/><circle cx="5" cy="4" r=".9" fill="#777"/><circle cx="6.500" cy="21.500" r="1.500" fill="#888"/></svg></div>
    <div class="app run"><svg viewBox="0 0 24 24"><path d="M8 3H22L23 20H18Z" fill="#8f7b5c"/><path d="M7 3 21 2.500 17 20H2Z" fill="#70b8c6"/><path d="M7 3 21 2.500 19.500 9 5 12Z" fill="#a9d9df"/><path d="M2 20H17L18 22H4Z" fill="#f0f5f7"/><path d="M7 2.500H21" stroke="#687980" stroke-dasharray="1 1" stroke-width="1.600"/></svg></div>
    <div class="app run"><svg viewBox="0 0 24 24"><path d="M2 1H23V23H2Z" fill="#fff" stroke="#d45b2a"/><path d="M3 2H15V18H3Z" fill="#e2562a"/><path d="M7 15.500V5.500H9.500Q12.300 5.500 12.300 8.500T9.500 11.500H7.500" fill="none" stroke="#fff" stroke-width="2"/><path d="M15 4H21M15 7H21M15 10H21" stroke="#e5825c"/><circle cx="16" cy="16" r="5" fill="#f2eae6" stroke="#d45b2a"/><path d="M16 16V11A5 5 0 0 1 21 16Z" fill="#e2562a"/><path d="M11 20 20 14" stroke="#e2562a"/></svg></div>
    <div class="app run"><svg viewBox="0 0 24 24"><path d="M12 1 22 6.500V17.500L12 23 2 17.500V6.500Z" fill="#a6a9ac"/><path d="M12 4.500 18.500 8V16L12 19.500 5.500 16V8Z" fill="#2b2e32"/><path d="M12 12 6 8.500M12 12 18 8.500M12 12V19" stroke="#a6a9ac" stroke-width="1.800"/><path d="M7.500 13 9.500 14.200M16.500 13 14.500 14.200M12 5V8" stroke="#b9bcbf"/></svg></div>
    <div class="app run act"><svg viewBox="0 0 24 24"><path d="M12 .5 21.500 6V17.500L12 23.500 2.500 17.500V6Z" fill="#46525f"/><path d="M12 3 19.500 7.300V16.500L12 21 4.500 16.500V7.300Z" fill="#b9c6d0"/><path d="M12 12 5 8M12 12 19 8M12 12V20M8 5.500 11 7.500M16 5.500 13 7.500M5 13V16L9 18.500" stroke="#35414d" stroke-width="2" fill="none"/><path d="M16 14H22V22H16Z" fill="#dde2e8" opacity=".8"/><path d="M20.500 14.800Q17.300 15.200 17.500 18.200T19.500 20.500 20.700 18.200 17.800 17.700" fill="none" stroke="#687380" stroke-width="1.200"/></svg></div>
    <div class="app run"><svg viewBox="0 0 24 24"><path d="M10 4 18 3 22 5V15L14 17 10 14Z" fill="#c9c9c5"/><path d="M11 6 16 5.500V11L11 12Z" fill="#26362a"/><path d="M11 8.500 13.500 8V10.500L11 11Z" fill="#33b64a"/><path d="M2 15 10 13 21 16V20L11 22.500 2 19Z" fill="#e2e2de"/><path d="M2 15 11 18V22.500L2 19ZM18 3 22 5V15L18 16Z" fill="#9b9b98"/><path d="M13 19.500 19 18" stroke="#555"/></svg></div>
    <div class="app run"><svg viewBox="0 0 24 24"><path d="M17.500 0 23.500 3V21L17.500 24 7 14.300 2.700 17.500 .5 16.300V7.700L2.700 6.500 7 9.700ZM17.500 7 11 12 17.500 17Z" fill="#1f8fdc" fill-rule="evenodd"/><path d="M17.500 0 23.500 3V21L17.500 24Z" fill="#35a8f2"/><path d="M.5 10 2.700 12 .5 14Z" fill="#dfe3ef"/></svg></div>
  </div>
  <div class="tray">
    <svg class="t1" viewBox="0 0 12 7"><path d="M.5 6.500 6 1 11.500 6.500" fill="none" stroke="#111" stroke-width="1.300"/></svg>
    <svg class="t2" viewBox="0 0 12 16"><path d="M1 4.500H8V11.500H1ZM8.500 7 11 5V11L8.500 9M2 1.500Q5 .2 8 1.500M2 14.500Q5 15.800 8 14.500" fill="none" stroke="#111" stroke-width="1.200"/></svg>
    <svg class="t3" viewBox="0 0 16 12"><path d="M4 11A3 3 0 0 1 3.500 5Q5 .8 9 1.500 12 2 12.500 5 15.500 5.500 15.300 8.500 15 11 12.500 11Z" fill="#dadada" stroke="#222" stroke-width="1.100"/><path d="M4 5Q6 .5 10 2L12 5 7 7.500Z" fill="#777"/></svg>
    <svg class="t4" viewBox="0 0 13 13"><path d="M1 12A11 11 0 0 1 12 1M4 12A8 8 0 0 1 12 4" fill="none" stroke="#999"/><path d="M6.500 12.500A5.500 5.500 0 0 1 12 7M4 12.500A8 8 0 0 1 12 4.500M9 12.500A3 3 0 0 1 12 9.500" fill="none" stroke="#222" stroke-width="1.100"/><circle cx="11.500" cy="12" r="1.200" fill="#111"/></svg>
    <svg class="t5" viewBox="0 0 17 14"><path d="M5.500 4.500H15V11.500H5.500Z" fill="none" stroke="#111"/><path d="M7 6H13.800V10H7ZM15.500 6.500H16.500V9.500H15.500ZM.5 3H5.500V5.500Q5.500 7 3 7T.5 5.500ZM1.200 .5H2.200V3H1.200ZM3.800 .5H4.800V3H3.800Z" fill="#111"/><path d="M3 6.500V11.500H6" fill="none" stroke="#111"/></svg>
    <span class="eng">ENG</span>
    <div class="clock"><span>09:23</span><span class="date">06-04-2025</span></div>
    <div class="note"><svg width="16" height="15" viewBox="0 0 16 15"><path d="M0 0H16V12H8L5 15V12H0Z" fill="#000"/><path d="M3 3.500H13M3 6H13M3 8.500H9" stroke="#e2e5ef"/></svg><span class="badge nb">8</span></div>
    <i class="peek"></i>
  </div>
</footer>
</body>
</html>
```
FILE: styles.css
```css
* { box-sizing: border-box; }
body { margin: 0; width: 1360px; height: 768px; overflow: hidden; display: flex; flex-direction: column; background: #191919; color: #c4c4c4; font-family: Inter, "Liberation Sans", sans-serif; font-size: 12px; line-height: 16px; white-space: nowrap; }
svg { display: block; flex: none; }
i, em { font-style: normal; display: block; flex: none; }
b { font-weight: 600; }
.defs { position: absolute; width: 0; height: 0; }
.i8 { width: 8px; height: 8px; } .i9 { width: 9px; height: 9px; }
.i11 { width: 11px; height: 11px; } .i12 { width: 12px; height: 12px; }
.i13 { width: 13px; height: 13px; } .i14 { width: 14px; height: 14px; }
.i15 { width: 15px; height: 15px; } .i16 { width: 16px; height: 16px; }
.i17 { width: 17px; height: 17px; } .i24 { width: 24px; height: 24px; }
.dn { width: 8px; height: 5px; } .dns { width: 8px; height: 5px; }
.dots { width: 4px; height: 12px; } .lock { width: 12px; height: 12px; margin-left: auto; }
.fold { width: 10px; height: 9px; color: #6c6c6c; } .foldr { width: 9px; height: 10px; color: #6c6c6c; }

/* Window frame */
.titlebar { height: 24px; background: #fff; display: flex; align-items: center; color: #000; font: 12px/16px "Open Sans", "Noto Sans", sans-serif; padding: 0 0 1px 2px; }
.title { margin-left: 5px; letter-spacing: -.28px; }
.winbtns { width: 110px; height: 22px; margin-left: auto; margin-right: 11px; }
.menubar { height: 19px; background: #fff; border-bottom: 2px solid #f0f0f0; display: flex; align-items: center; color: #000; font: 12px/16px "Open Sans", "Noto Sans", sans-serif; padding-left: 7px; }
.menubar span { letter-spacing: -.15px; }
.m1 { width: 32px; } .m2 { width: 34px; } .m3 { width: 47px; } .m4 { width: 80px; } .m5 { width: 78px; } .m6 { width: 56px; } .m7 { width: 58px; }

/* Main toolbar */
.toolbar { height: 36px; background: #141414; display: flex; align-items: center; justify-content: space-between; }
.tb-left { width: 633px; display: flex; align-items: center; padding-left: 8px; }
.ulogo { width: 18px; height: 20px; }
.uname { color: #fff; margin-left: 4px; width: 41px; letter-spacing: -.2px; }
.sep { width: 1px; height: 12px; background: #555; margin: 0 14px 0 8px; }
.ek { margin-left: 5px; width: 22px; } .bag { margin-left: 17px; } .as { margin-left: 6px; width: 73px; letter-spacing: .15px; }
.branch { width: 14px; height: 12px; margin-left: 19px; }
.play { display: flex; gap: 2px; margin-right: auto; }
.play span { width: 32px; height: 20px; background: #585858; border-radius: 2px; display: grid; place-items: center; }
.play .off { background: #303030; }
.play .i13 { width: 12px; height: 12px; }
.tb-right { display: flex; align-items: center; padding-right: 14px; }
.cloud { width: 14px; height: 10px; } .hist { width: 14px; height: 14px; margin-left: 22px; } .msearch { width: 13px; height: 13px; margin-left: 23px; } .lay { width: 13px; height: 12px; margin-left: 18px; } .layout-t { margin-left: 5px; width: 46px; letter-spacing: .15px; }

/* Docked panels */
.work { height: 627px; display: flex; gap: 2px; background: #141414; }
.left { width: 1038px; display: flex; flex-direction: column; gap: 2px; }
.top { height: 371px; display: flex; gap: 2px; }
.tabs { height: 24px; display: flex; align-items: center; background: #141414; padding-right: 11px; }
.tab { height: 24px; background: #3c3c3c; border-radius: 3px 3px 0 0; display: flex; align-items: center; gap: 4px; padding: 1px 0 0 9px; color: #bdbdbd; }
.tab2 { display: flex; align-items: center; gap: 3px; margin-left: 9px; padding-top: 1px; color: #c4c4c4; }
.tabs .lock { margin-right: 9px; }
.t-h { width: 108px; } .t-s { width: 90px; gap: 4px; padding-left: 10px; } .t-p { width: 94px; } .t-i { width: 108px; padding-left: 10px; gap: 5px; }
.pad { width: 14px; height: 9px; } .end { margin-left: auto; }
.bar { height: 21px; background: #3c3c3c; display: flex; align-items: center; padding-left: 7px; border-bottom: 1px solid #232323; }
.plus { width: 12px; height: 12px; } .bar > .dns { margin-left: 4px; }
.search { height: 16px; background: #292929; border: 1px solid #1d1d1d; border-radius: 3px 0 0 3px; display: flex; align-items: center; padding-left: 4px; gap: 5px; color: #6e6e6e; }
.search svg { color: #c4c4c4; }
.pop { width: 18px; height: 16px; border: 1px solid #222; border-left: 0; border-radius: 0 3px 3px 0; background: #333; display: grid; place-items: center; }
.hier { width: 256px; display: flex; flex-direction: column; background: #383838; border-radius: 3px; overflow: hidden; }
.hs { width: 192px; margin-left: 12px; gap: 5px; }
.tree { flex: 1; background: linear-gradient(90deg, #303030 32px, #383838 32px); }
.scene-row { height: 16px; background: #2d2d2d; display: flex; align-items: center; padding: 0 10px 0 34px; color: #d2d2d2; }
.scene-row .uw { margin: 0 5px 0 3px; } .scene-row .dots { margin-left: auto; }
.row { height: 16px; display: flex; align-items: center; padding-left: 60px; color: #bcbcbc; }
.row.sel { background: linear-gradient(90deg, #444 32px, #4d4d4d 32px); }
.cube { width: 16px; height: 16px; margin-right: 2px; }
.row .fold { margin-right: 2px; }
.row .cube { margin-left: -1px; margin-right: 3px; }
.l1.f { padding-left: 48px; } .l2.f { padding-left: 62px; } .l3 { padding-left: 88px; }

/* Scene view */
.scene { width: 780px; display: flex; flex-direction: column; overflow: hidden; background: #3c3c3c; }
.scene .tabs { padding-right: 11px; }
.stools { height: 26px; display: flex; align-items: center; background: #3c3c3c; padding-left: 5px; overflow: hidden; flex: none; }
.grip { width: 4px; height: 16px; border: solid #5a5a5a; border-width: 0 1px; flex: none; }
.b { height: 20px; background: #585858; border-radius: 2px; display: flex; align-items: center; justify-content: center; flex: none; color: #c4c4c4; }
.b .dn, .b .i14 + span, .b .i15 + span { margin-left: 3px; } .b span + .dn { margin-left: 6px; }
.on { background: #46607c; color: #e8eef4; }
.w78 { width: 79px; } .w71 { width: 71px; } .w22 { width: 22px; } .w14 { width: 14px; } .w32 { width: 32px; } .w36 { width: 36px; }
.g1 { margin-left: 1px; } .g4 { margin-left: 4px; } .g5 { margin-left: 5px; } .g7 { margin-left: 7px; } .g8 { margin-left: 7px; } .g8b { margin-left: 8px; } .g9 { margin-left: 9px; }
.twod { font-weight: 700; font-size: 11px; } .m5l { margin-left: 5px; } .b.on .dns, .b.on .eye { color: #c4c4c4; }
.num { width: 37px; height: 20px; background: #292929; border: 1px solid #1a1a1a; border-radius: 3px; padding: 1px 5px; flex: none; }
.eye { width: 15px; height: 11px; } .cam { width: 14px; height: 10px; opacity: .8; }
.view { position: relative; height: 321px; }
.canvas { width: 780px; height: 321px; }
.vtools { position: absolute; left: 2px; top: 2px; width: 43px; height: 147px; background: #141414; border-radius: 3px; padding: 0 3px; display: flex; flex-direction: column; gap: 1px; }
.vtools div, .htools div { display: grid; place-items: center; background: #585858; }
.vtools div { height: 20px; } .vtools .dim { opacity: .75; }
.hgrip { height: 4px; width: 16px; margin: 6px auto 7px; border: solid #5a5a5a; border-width: 1px 0; }
.htools { position: absolute; left: 3px; top: 293px; width: 248px; height: 26px; background: #141414; border-radius: 3px; display: flex; gap: 1px; align-items: center; padding-left: 4px; }
.htools div { width: 32px; height: 20px; } .htools .grip { margin-right: 6px; }
.vtools .on, .htools .on { background: #46607c; }

/* Project */
.project { height: 254px; display: flex; flex-direction: column; background: #383838; }
.con { margin-left: 11px; gap: 5px; } .conic { width: 10px; height: 12px; }
.project .plock { margin-left: auto; }
.fol { width: 12px; height: 10px; } .fo { width: 14px; height: 11px; }
.pbar { height: 21px; background: #3c3c3c; }
.ps { width: 301px; margin-left: auto; padding-left: 4px; } .pbar .pop { margin-right: 2px; }
.pb { height: 20px; width: 26px; border-left: 1px solid #262626; display: flex; align-items: center; justify-content: center; color: #c4c4c4; padding-right: 2px; }
.pb.dimmer { color: #7b7b7b; } .pe { width: 41px; font-size: 13px; gap: 1px; padding: 0; } .pe span { color: #8c8c8c; } .eye2 { width: 14px; height: 10px; }
.pbody { display: flex; height: 209px; }
.ptree { width: 194px; overflow: hidden; }
.pr { height: 16px; display: flex; align-items: center; padding-left: 3px; color: #bcbcbc; }
.pr b { color: #c6c6c6; margin-left: 4px; } .st { margin-left: 5px; margin-right: 1px; } .root b { margin-left: 3px; }
.pr.gap { margin-top: 15px; } .pr.gap .fo { margin-left: 5px; margin-right: -1px; }
.pr.p1 { padding-left: 32px; gap: 4px; } .pr.q { gap: 3px; } .pr.p1f { padding-left: 18px; gap: 3px; } .p1f .fold { margin-right: 1px; } .p1f .fo { margin-right: -1px; }
.pr.p2 { padding-left: 46px; gap: 4px; } .pr.p2f { padding-left: 32px; gap: 4px; } .p2f .foldr { margin-right: 1px; }
.pr.sel { background: #4d4d4d; }
.sb { width: 13px; background: #333; display: flex; flex-direction: column; align-items: center; border-left: 1px solid #2c2c2c; }
.sb .dns { margin-top: auto; margin-bottom: 5px; } .sb .up { transform: rotate(180deg); margin: 5px 0 6px; }
.thumb { width: 10px; background: #5e5e5e; border-radius: 5px; }
.psb { border-right: 1px solid #232323; width: 14px; } .psb .thumb { height: 87px; } .psb .up { margin: 6px 0 5px; }
.files { flex: 1; display: flex; flex-direction: column; background: #333; }
.crumb { height: 21px; background: #3c3c3c; display: flex; align-items: center; padding: 0 0 2px 4px; color: #aaa; } .chev { width: 6px; height: 10px; margin: 1px 5px 0 7px; } .crumb b { color: #b9b9b9; }
.grid { height: 167px; display: flex; gap: 16px; padding: 14px 0 0 17px; }
.file { width: 60px; display: flex; flex-direction: column; align-items: center; font-size: 10px; color: #b6b6b6; gap: 5px; } .file svg { width: 48px; height: 56px; }
.fbar { height: 21px; background: #3c3c3c; display: flex; align-items: center; justify-content: flex-end; padding-right: 15px; }

/* Inspector */
.insp { width: 320px; display: flex; flex-direction: column; background: #383838; }
.insp .tabs { padding-right: 12px; }
.ibody { height: 570px; display: flex; overflow: hidden; }
.icont { width: 307px; overflow: hidden; }
.isb { width: 13px; } .isb .up { margin: 6px 0 6px; } .isb .thumb { height: 440px; }
.ihead { height: 59px; background: #3c3c3c; display: flex; padding-top: 8px; }
.bigcube { width: 40px; padding: 1px 0 0 5px; } .bigcube .dns { margin: -3px 0 0 20px; }
.hl { width: 267px; }
.h1, .h2 { display: flex; align-items: center; }
.h1 { height: 20px; padding-left: 5px; } .h2 { height: 20px; margin-top: 4px; }
.cb { width: 14px; height: 14px; background: #2a2a2a; border: 1px solid #1e1e1e; border-radius: 2px; display: grid; place-items: center; flex: none; }
.in { height: 18px; background: #2a2a2a; border: 1px solid #202020; border-top-color: #111; border-radius: 3px; padding: 0 0 0 4px; color: #c8c8c8; line-height: 17px; flex: 1; min-width: 0; }
.in.name { flex: none; width: 162px; margin: 0 3px 0 6px; padding-left: 2px; font-weight: 600; }
.h1 span { margin: 1px 13px 0 4px; width: 33px; color: #8d8d8d; letter-spacing: .1px; }
.tg { width: 24px; color: #9c9c9c; } .ly { width: 36px; margin-left: 14px; color: #9c9c9c; } .h2 { letter-spacing: .1px; }
.dd { height: 17px; background: #515151; border: 1px solid #303030; border-radius: 3px; display: flex; align-items: center; justify-content: space-between; padding: 0 4px 0 3px; color: #dedede; letter-spacing: .05px; }
.tagd { width: 100px; } .layd { width: 89px; }
.h2 .dd { padding-left: 2px; }
.chead { height: 22px; background: #3e3e3e; border-top: 1px solid #1a1a1a; border-bottom: 1px solid #303030; display: flex; align-items: center; padding: 0 11px 0 5px; }
.tr { margin-left: 7px; } .c1 { margin-left: 24px; } .c2 { margin-left: 6px; } .chead b { margin-right: auto; padding-top: 1px; }
.hi { width: 12px; height: 12px; margin-right: 8px; } .help { margin-right: 8px; } .chead .dots { margin-left: 4px; }
.trs { height: 71px; padding-top: 3px; }
.v3 { height: 20px; display: flex; align-items: center; padding: 0 4px 0 19px; color: #b3b3b3; }
.v3 > span { width: 110px; display: flex; align-items: center; justify-content: space-between; padding: 1px 9px 0 0; }
.v3 em { width: 14px; padding-top: 1px; } .v3 .in { flex: none; width: 40px; margin-right: 6px; padding-left: 2px; } .v3 .in:last-child { margin-right: 0; } .link { width: 13px; height: 10px; }
.cam-h { height: 22px; } .camb { width: 14px; height: 10px; color: #72cdf4; margin-left: 6px; } .cam-h .cb { margin-left: 5px; }
.props { padding-top: 2px; }
.p { height: 20px; display: flex; align-items: center; padding: 0 4px 0 19px; color: #b3b3b3; }
.p label { width: 121px; flex: none; letter-spacing: -.03px; padding-top: 1px; }
.p .dd { width: 163px; margin-top: 1px; padding-bottom: 1px; } .s18 { height: 18px; } .a1 { margin-top: 1px; } .a7 { margin-top: 7px; } .a8 { margin-top: 8px; }
.color { width: 163px; height: 17px; border: 1px solid #222; border-radius: 2px; display: flex; justify-content: space-between; padding-right: 2px; align-items: center; margin-bottom: 1px; }
.color i { width: 143px; height: 15px; background: linear-gradient(90deg, #fff 3px, #000 3px) 0 100% / 100% 3px no-repeat #314d79; }
.slider { width: 108px; height: 2px; background: #5e5e5e; margin-right: 5px; position: relative; }
.slider i { position: absolute; left: 33px; top: -4px; width: 10px; height: 10px; border-radius: 5px; background: #999; }
.sub { width: 35px; padding: 1px 0 0 1px; } .vr > span { width: 15px; padding: 1px 0 0 1px; } .vr .in { flex: none; width: 37px; } .vr .y { margin-left: 4px; }
.obj { display: flex; padding: 0 0 0 4px; justify-content: space-between; color: #8d8d8d; letter-spacing: .07px; } .obj div { width: 18px; background: #383838; display: grid; place-items: center; }
.labels { height: 27px; border-top: 1px solid #1a1a1a; border-bottom: 1px solid #1a1a1a; background: #3c3c3c; padding: 5px 4px; color: #b4b4b4; }
.ifoot { height: 6px; background: #3c3c3c; }

/* Status line */
.status { height: 22px; background: #141414; display: flex; align-items: center; color: #a32022; padding: 0 1px 0 3px; font-size: 12px; }
.err { width: 14px; height: 14px; margin-right: 3px; } .status > span { margin-right: auto; letter-spacing: .01px; padding-top: 1px; }
.sic { width: 26px; height: 20px; border-left: 1px solid #262626; display: grid; place-items: center; color: #c4c4c4; padding-right: 1px; margin-top: 2px; }
.sic svg { grid-area: 1 / 1; } .slash { width: 14px; height: 14px; }

/* Windows taskbar */
.taskbar { height: 40px; display: flex; background: linear-gradient(90deg, #d9e4ee 0, #e1e6ef 330px, #efe7ee 600px, #e6e3ee 720px, #d4dae9 860px, #d8ddea 1000px, #dcdfed 1360px); color: #111; font-family: "Open Sans", "Noto Sans", sans-serif; }
.start { width: 48px; display: grid; place-items: center; }
.wsearch { width: 288px; background: #fff; border: 1px solid #c9c9c9; display: flex; align-items: center; padding-left: 11px; }
.wsearch span { margin: 1px 0 0 11px; font-size: 14.5px; width: 177px; letter-spacing: -.25px; color: #333; }
.apps { display: flex; padding-left: 3px; width: 686px; }
.app { width: 48.950px; flex: none; display: grid; place-items: center; position: relative; }
.app svg { width: 24px; height: 24px; grid-area: 1 / 1; }
.run { background: linear-gradient(#0a78d4, #0a78d4) 50% 100% / 40px 2px no-repeat; }
.multi { background: linear-gradient(90deg, #0a78d4 32px, #62a8e0 32px) 50% 100% / 40px 2px no-repeat; }
.act { background: linear-gradient(#0a78d4, #0a78d4) 50% 100% / 48px 2px no-repeat, linear-gradient(#f0f2f7, #f0f2f7) 50% 0 / 48px 40px no-repeat; }
.badge { position: absolute; left: 28px; top: 18px; width: 18px; height: 18px; border-radius: 9px; border: 1px solid #8b8b8b; background: #d5d5d5; text-align: center; font-size: 11px; line-height: 15px; }
.tray { display: flex; align-items: center; flex: 1; padding-left: 65px; }
.t1 { width: 12px; height: 7px; } .t2 { width: 12px; height: 16px; margin-left: 13px; } .t3 { width: 16px; height: 12px; margin-left: 9px; } .t4 { width: 13px; height: 13px; margin: 2px 0 0 10px; } .t5 { width: 17px; height: 14px; margin-left: 8px; }
.eng { margin-left: 10px; font-size: 12px; width: 24px; letter-spacing: -.3px; }
.clock { margin-left: 12px; width: 60px; display: flex; flex-direction: column; align-items: center; font-size: 12px; line-height: 18px; letter-spacing: -.45px; }
.note { margin-left: 15px; position: relative; width: 36px; } .nb { left: 7px; top: 5px; width: 17px; height: 17px; line-height: 15px; background: #d4d6de; }
.peek { width: 1px; height: 40px; background: #b3b6c0; }
```
